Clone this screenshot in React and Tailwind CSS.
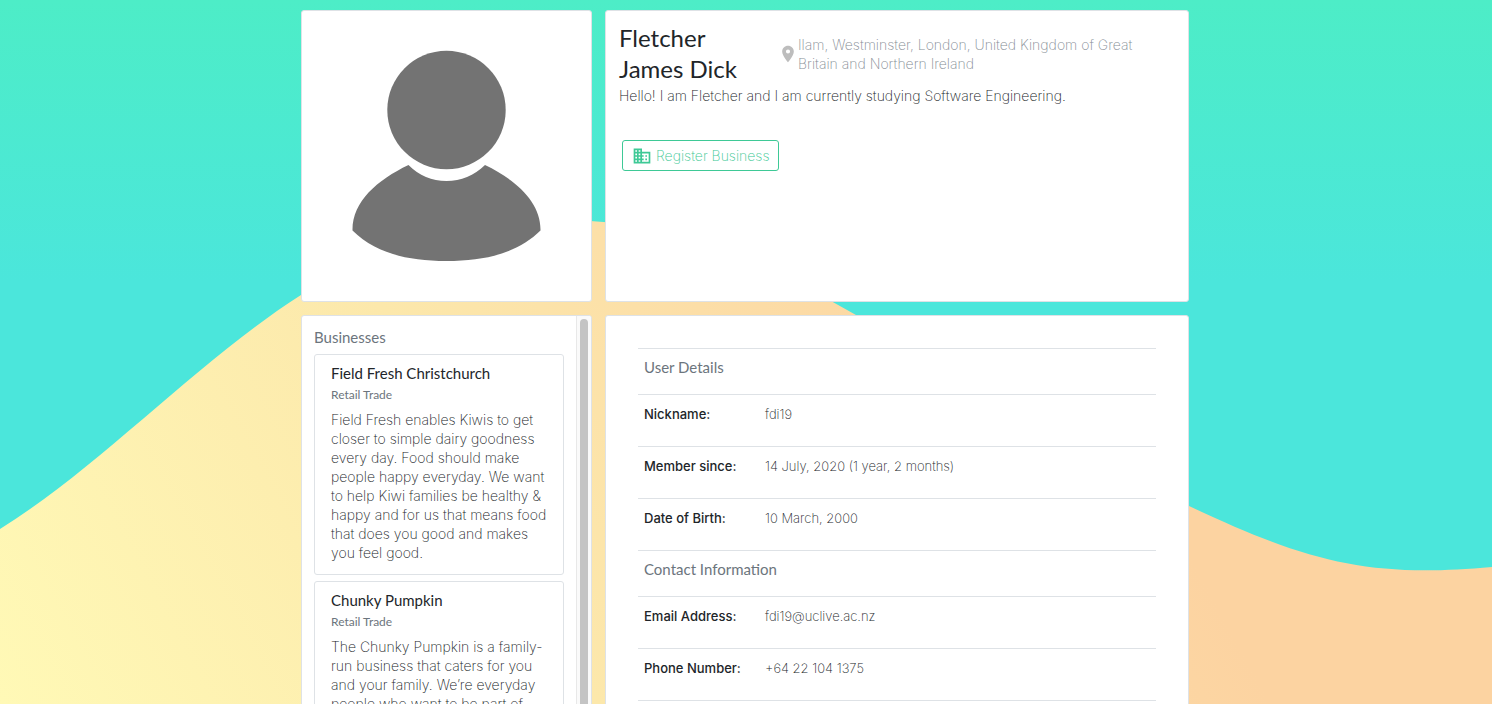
import React from "react";

const heading = "font-['Lato','Open_Sans',sans-serif]";

const businesses = [
  {
    name: "Field Fresh Christchurch",
    type: "Retail Trade",
    lines: [
      "Field Fresh enables Kiwis to get",
      "closer to simple dairy goodness",
      "every day. Food should make",
      "people happy everyday. We want",
      "to help Kiwi families be healthy &",
      "happy and for us that means food",
      "that does you good and makes",
      "you feel good.",
    ],
  },
  {
    name: "Chunky Pumpkin",
    type: "Retail Trade",
    lines: [
      "The Chunky Pumpkin is a family-",
      "run business that caters for you",
      "and your family. We’re everyday",
      "people who want to be part of",
    ],
  },
];

const sections = [
  {
    title: "User Details",
    rows: [
      ["Nickname:", "fdi19"],
      ["Member since:", "14 July, 2020 (1 year, 2 months)"],
      ["Date of Birth:", "10 March, 2000"],
    ],
  },
  {
    title: "Contact Information",
    rows: [
      ["Email Address:", "fdi19@uclive.ac.nz"],
      ["Phone Number:", "+64 22 104 1375"],
    ],
  },
];

function Background() {
  return (
    <svg
      className="absolute inset-0 h-full w-full"
      viewBox="0 0 1492 704"
      preserveAspectRatio="none"
      aria-hidden="true"
    >
      <defs>
        <linearGradient id="sky" x1="0" y1="0" x2="0" y2="1">
          <stop offset="0" stopColor="#4dedc7" />
          <stop offset="0.4" stopColor="#4be6db" />
          <stop offset="1" stopColor="#4be6db" />
        </linearGradient>
        <linearGradient id="sand" gradientUnits="userSpaceOnUse" x1="0" y1="704" x2="980" y2="170">
          <stop offset="0" stopColor="#fff9b6" />
          <stop offset="0.47" stopColor="#fce8ab" />
          <stop offset="0.67" stopColor="#fce0a8" />
          <stop offset="1" stopColor="#fcd3a1" />
        </linearGradient>
      </defs>
      <rect width="1492" height="704" fill="url(#sky)" />
      <path
        d="M0 529C104 464 196 362 301 295C405 229 500 221 590 221C690 226 770 266 856 315C960 375 1070 450 1189 506C1310 563 1370 578 1492 567V704H0Z"
        fill="url(#sand)"
      />
    </svg>
  );
}

function Card({ className = "", children }) {
  return (
    <section className={`rounded-[3px] border border-[#dee2e6] bg-white ${className}`}>{children}</section>
  );
}

function Avatar() {
  return (
    <svg viewBox="0 0 289 290" className="w-full" role="img" aria-label="Profile picture">
      <g fill="#737373">
        <circle cx="144.5" cy="99" r="59.2" />
        <path d="M106.500 154C117 164.500 130 170 144.500 170S172 164.500 183 154C214 169 239 191 238.500 219.500C216 241.500 185 250 144.500 250S73 241.500 50.500 219.500C50 191 75 169 106.500 154Z" />
      </g>
    </svg>
  );
}

export default function App() {
  return (
    <div className="relative h-screen overflow-hidden font-['Inter',sans-serif] text-[14px] leading-[19px] font-extralight text-[#212529]">
      <Background />
      <main className="relative mx-auto grid max-w-[890px] grid-cols-[291fr_584fr] gap-[13px] pt-[10px] pr-[2px]">
        <Card>
          <Avatar />
        </Card>
        <Card className="px-[13px] pt-[11px]">
          <div className="flex items-center">
            <h1 className={`${heading} w-[163px] pr-8 text-[24px] leading-[31px] font-normal`}>
              Fletcher James Dick
            </h1>
            <div className="flex flex-1 items-center pt-[2px] text-[#868e96]">
              <svg viewBox="0 0 24 24" className="-ml-1 size-5 shrink-0" fill="#bdbdbd" aria-hidden="true">
                <path d="M12 2C8.130 2 5 5.130 5 9c0 5.250 7 13 7 13s7-7.750 7-13c0-3.870-3.130-7-7-7zm0 9.500a2.500 2.500 0 0 1 0-5 2.500 2.500 0 0 1 0 5z" />
              </svg>
              <p>
                Ilam, Westminster, London, United Kingdom of Great
                <br />
                Britain and Northern Ireland
              </p>
            </div>
          </div>
          <p className="mt-[2px]">Hello! I am Fletcher and I am currently studying Software Engineering.</p>
          <button
            type="button"
            className="mt-[35px] ml-[3px] flex h-[31px] items-center gap-1 rounded-[3px] border border-[#3ec996] px-[9px] text-[#3ec996]"
          >
            <svg viewBox="0 0 24 24" className="size-5" fill="currentColor" aria-hidden="true">
              <path d="M12 7V3H2v18h20V7H12zM6 19H4v-2h2v2zm0-4H4v-2h2v2zm0-4H4V9h2v2zm0-4H4V5h2v2zm4 12H8v-2h2v2zm0-4H8v-2h2v2zm0-4H8V9h2v2zm0-4H8V5h2v2zm10 12h-8v-2h2v-2h-2v-2h2v-2h-2V9h8v10zm-2-8h-2v2h2v-2zm0 4h-2v2h2v-2z" />
            </svg>
            Register Business
          </button>
        </Card>
        <Card className="flex overflow-hidden">
          <div className="min-w-0 flex-1 px-3 py-3">
            <h2 className={`${heading} mb-[7px] text-[15px] leading-[19px] font-normal text-[#6c757d]`}>Businesses</h2>
            <ul className="flex flex-col gap-[6px]">
              {businesses.map((b) => (
                <li key={b.name} className="rounded-[3px] border border-[#dee2e6] px-4 pt-2 pb-3">
                  <h3 className={`${heading} text-[15px] leading-[20px] font-normal`}>{b.name}</h3>
                  <p className={`${heading} mb-[3px] text-[12px] leading-[24px] font-normal text-[#6c757d]`}>{b.type}</p>
                  <p className="whitespace-pre">{b.lines.join("\n")}</p>
                </li>
              ))}
            </ul>
          </div>
          <div className="w-[15px] border-l border-[#e8e8e8] bg-[#fafafa] px-[3px] pt-[3px]" aria-hidden="true">
            <div className="h-full rounded-t-full bg-[#c4c4c4]" />
          </div>
        </Card>
        <Card className="px-8 py-8">
          <table className="w-full border-collapse border-b border-[#dee2e6] text-left text-[13px]">
            {sections.map((s) => (
              <tbody key={s.title}>
                <tr className="h-[46px] border-t border-[#dee2e6]">
                  <th
                    colSpan={2}
                    className={`${heading} px-[6px] pt-[9px] align-top text-[15px] leading-[19px] font-normal text-[#6c757d]`}
                  >
                    {s.title}
                  </th>
                </tr>
                {s.rows.map(([label, value]) => (
                  <tr key={label} className="h-[52px] border-t border-[#dee2e6]">
                    <th className="w-[121px] pt-[10px] pl-[6px] align-top font-medium">{label}</th>
                    <td className="px-[6px] pt-[10px] align-top">{value}</td>
                  </tr>
                ))}
              </tbody>
            ))}
          </table>
        </Card>
      </main>
    </div>
  );
}
